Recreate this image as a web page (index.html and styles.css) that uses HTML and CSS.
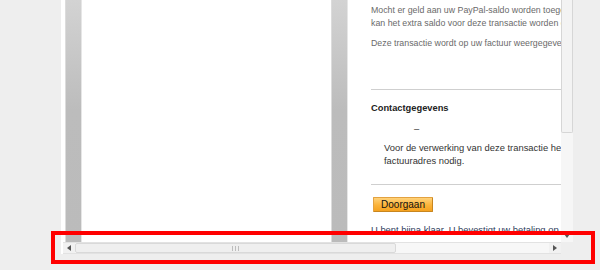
FILE: index.html
```html
<!DOCTYPE html>
<html lang="nl">
<head>
<meta charset="utf-8">
<title>PayPal</title>
<link rel="stylesheet" href="styles.css">
</head>
<body>
<div class="frame">
  <div class="viewport">
    <div class="page">
      <div class="rail"></div>
      <div class="blank"></div>
      <div class="rail"></div>
      <div class="content">
        <p class="note">Mocht er geld aan uw PayPal-saldo worden toegevoegd voordat deze transactie is voltooid,<br>kan het extra saldo voor deze transactie worden gebruikt.</p>
        <p class="note gap">Deze transactie wordt op uw factuur weergegeven als PayPal.</p>
        <hr class="rule first">
        <h3 class="heading">Contactgegevens</h3>
        <div class="dash">–</div>
        <p class="body">Voor de verwerking van deze transactie hebben wij uw<br>factuuradres nodig.</p>
        <hr class="rule second">
        <button class="go" type="button">Doorgaan</button>
        <p class="body last">U bent bijna klaar. U bevestigt uw betaling op de volgende pagina.</p>
      </div>
    </div>
  </div>
  <div class="vscroll">
    <div class="vthumb"></div>
    <div class="vtrack"></div>
    <div class="vbtn"><svg width="6" height="4" viewBox="0 0 6 4"><path d="M0 0H6L3 4Z" fill="#555"/></svg></div>
  </div>
  <div class="hscroll">
    <div class="hbtn"><svg width="4" height="6" viewBox="0 0 4 6"><path d="M4 0V6L0 3Z" fill="#555"/></svg></div>
    <div class="htrack">
      <div class="hthumb"><span class="grip"></span></div>
    </div>
    <div class="hbtn"><svg width="4" height="6" viewBox="0 0 4 6"><path d="M0 0V6L4 3Z" fill="#555"/></svg></div>
  </div>
  <div class="corner"></div>
</div>
<div class="highlight"></div>
</body>
</html>
```
FILE: styles.css
```css
html, body {
  margin: 0;
  padding: 0;
}
body {
  background: #eeeeee;
  width: 600px;
  height: 270px;
  overflow: hidden;
  position: relative;
  font-family: "Liberation Sans", Arial, sans-serif;
}
.frame {
  margin-left: 61px;
  width: 512px;
  height: 254px;
  display: grid;
  grid-template-columns: 500px 12px;
  grid-template-rows: 242px 12px;
}
.viewport {
  background: #ffffff;
  padding-left: 4px;
  overflow: hidden;
}
.page {
  display: flex;
  height: 100%;
}
.rail {
  width: 15px;
  flex: none;
  border-left: 1px solid #dcdcdc;
  border-right: 1px solid #e6e6e6;
  background: linear-gradient(#d3d3d3 0px, #bcbcbc 110px, #bbbbbb 242px);
}
.blank {
  width: 249px;
  flex: none;
}
.content {
  flex: 1;
  min-width: 0;
  overflow: hidden;
  padding-left: 23px;
  white-space: nowrap;
}
.note {
  margin: 4px 0 0;
  font-size: 8.8px;
  line-height: 13px;
  color: #6a6a6a;
}
.note.gap {
  margin-top: 7px;
}
.rule {
  border: 0;
  height: 1px;
  margin: 0;
  background: #cfcfcf;
}
.rule.first {
  margin-top: 39px;
}
.heading {
  margin: 12px 0 0;
  font-size: 9.3px;
  line-height: 13px;
  font-weight: bold;
  color: #222;
}
.dash {
  margin: 7px 0 0 43px;
  font-size: 9.4px;
  line-height: 13px;
  color: #333;
}
.body {
  margin: 6px 0 0 13px;
  font-size: 9.4px;
  line-height: 13px;
  color: #333;
}
.rule.second {
  margin-top: 17px;
}
.go {
  display: block;
  margin: 12px 0 0 2px;
  width: 60px;
  height: 15px;
  padding: 0;
  font-family: "Liberation Sans", Arial, sans-serif;
  font-size: 10px;
  line-height: 13px;
  color: #111;
  background: linear-gradient(#ffd27a, #fbb339 55%, #f5a21f);
  border: 1px solid #e3a240;
  border-right-color: #c8861f;
  border-bottom-color: #c8861f;
  border-radius: 1px;
}
.body.last {
  margin: 11px 0 0 0;
  color: #2f3d5c;
}
.vscroll {
  display: flex;
  flex-direction: column;
  background: #f6f6f6;
}
.vthumb {
  height: 133px;
  box-sizing: border-box;
  border: 1px solid #d6d6d6;
  border-top: 0;
  background: #f3f3f3;
  border-radius: 0 0 2px 2px;
}
.vtrack {
  flex: 1;
}
.vbtn {
  height: 12px;
  display: flex;
  align-items: center;
  justify-content: center;
}
.hscroll {
  background: #ffffff;
  padding-left: 2px;
  display: flex;
  align-items: stretch;
}
.hbtn {
  width: 12px;
  flex: none;
  display: flex;
  align-items: center;
  justify-content: center;
  background: #f1f1f1;
  border-top: 1px solid #e2e2e2;
  border-bottom: 1px solid #e2e2e2;
  box-sizing: border-box;
}
.htrack {
  flex: 1;
  background: #f7f7f7;
  border-top: 1px solid #e2e2e2;
  border-bottom: 1px solid #e2e2e2;
  box-sizing: border-box;
  display: flex;
}
.hthumb {
  width: 321px;
  box-sizing: border-box;
  border: 1px solid #d9d9d9;
  border-radius: 2px;
  background: #efefef;
  display: flex;
  align-items: center;
  justify-content: center;
}
.grip {
  width: 7px;
  height: 5px;
  background: repeating-linear-gradient(90deg, #bdbdbd 0 1px, transparent 1px 3px);
}
.corner {
  background: #eeeeee;
}
.highlight {
  position: absolute;
  left: 51px;
  top: 231px;
  width: 544px;
  height: 33px;
  box-sizing: border-box;
  border: 4px solid #ff0000;
}
```
